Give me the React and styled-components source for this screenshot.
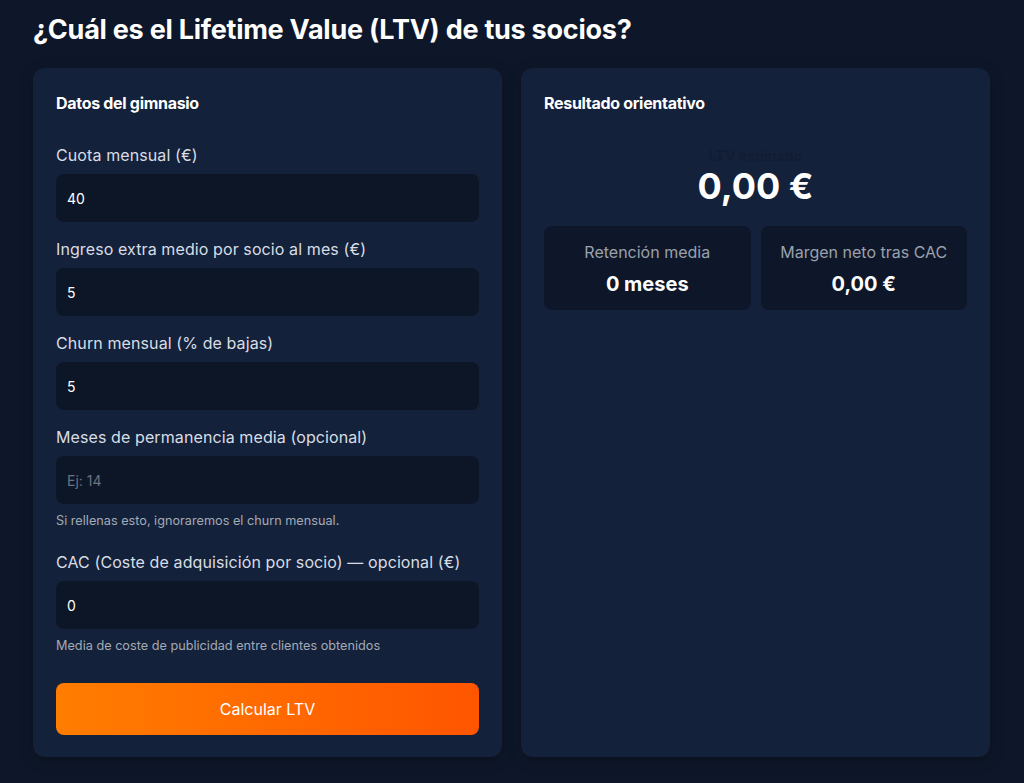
import React from "react";
import styled, { createGlobalStyle } from "styled-components";

const Global = createGlobalStyle`
  html, body { margin: 0; padding: 0; background: #0e1729; }
  body { font-family: Inter, "Noto Sans", sans-serif; color: #e5e7eb; }
  * { box-sizing: border-box; }
`;

const Page = styled.div`
  min-height: 783px;
  padding: 14px 33px 26px 33px;
  background: #0e1729;
`;

const Title = styled.h1`
  margin: 0 0 22px;
  font-size: 27px;
  line-height: 32px;
  font-weight: 700;
  letter-spacing: -0.25px;
  color: #ffffff;
`;

const Grid = styled.div`
  display: grid;
  grid-template-columns: 469px 469px;
  gap: 19px;
`;

const Card = styled.section`
  background: #14213a;
  border-radius: 12px;
  padding: 23px 23px 22px 23px;
  min-height: 689px;
  box-shadow: 0 4px 14px rgba(0, 0, 0, 0.25);
  display: flex;
  flex-direction: column;
`;

const CardTitle = styled.h2`
  margin: 0 0 28px;
  font-size: 16px;
  line-height: 24px;
  font-weight: 700;
  letter-spacing: -0.3px;
  color: #ffffff;
`;

const Field = styled.div`
  display: flex;
  flex-direction: column;
  margin-bottom: ${(p) => p.$mb || 15}px;
`;

const Label = styled.label`
  font-size: 16px;
  line-height: 24px;
  letter-spacing: 0.1px;
  color: #d8dde5;
  margin-bottom: 7px;
`;

const Input = styled.input`
  height: 48px;
  width: 100%;
  border: none;
  outline: none;
  border-radius: 8px;
  background: #0d1627;
  color: #ffffff;
  font-family: Inter, "Noto Sans", sans-serif;
  font-size: 14px;
  padding: 0 11px;
  &::placeholder { color: #6b7280; }
`;

const Help = styled.p`
  margin: 8px 0 0;
  font-size: 12.7px;
  line-height: 18px;
  color: #a3aab5;
`;

const Button = styled.button`
  margin-top: 13px;
  height: 52px;
  width: 100%;
  border: none;
  border-radius: 8px;
  background: linear-gradient(90deg, #ff7d00 0%, #ff6a00 50%, #ff5500 100%);
  color: #ffffff;
  font-family: Inter, "Noto Sans", sans-serif;
  font-size: 16px;
  cursor: pointer;
`;

const ResultHead = styled.div`
  display: flex;
  flex-direction: column;
  align-items: center;
  margin-top: 4px;
`;

const Ghost = styled.div`
  font-size: 14px;
  line-height: 18px;
  font-weight: 700;
  color: #121c32;
`;

const BigValue = styled.div`
  font-size: 36px;
  line-height: 42px;
  font-weight: 700;
  color: #ffffff;
  margin-bottom: 19px;
`;

const Stats = styled.div`
  display: grid;
  grid-template-columns: 1fr 1fr;
  gap: 10px;
`;

const Stat = styled.div`
  background: #0e1729;
  border-radius: 8px;
  height: 84px;
  display: flex;
  flex-direction: column;
  align-items: center;
  justify-content: center;
  gap: 10px;
  padding-top: 1px;
`;

const StatLabel = styled.div`
  font-size: 16px;
  line-height: 20px;
  color: #9aa1ad;
`;

const StatValue = styled.div`
  font-size: 20px;
  line-height: 24px;
  font-weight: 700;
  color: #ffffff;
`;

export default function App() {
  return (
    <Page>
      <Global />
      <Title>¿Cuál es el Lifetime Value (LTV) de tus socios?</Title>
      <Grid>
        <Card>
          <CardTitle>Datos del gimnasio</CardTitle>
          <Field>
            <Label>Cuota mensual (€)</Label>
            <Input defaultValue="40" />
          </Field>
          <Field>
            <Label>Ingreso extra medio por socio al mes (€)</Label>
            <Input defaultValue="5" />
          </Field>
          <Field>
            <Label>Churn mensual (% de bajas)</Label>
            <Input defaultValue="5" />
          </Field>
          <Field $mb={20}>
            <Label>Meses de permanencia media (opcional)</Label>
            <Input placeholder="Ej: 14" />
            <Help>Si rellenas esto, ignoraremos el churn mensual.</Help>
          </Field>
          <Field $mb={15}>
            <Label>CAC (Coste de adquisición por socio) — opcional (€)</Label>
            <Input defaultValue="0" />
            <Help>Media de coste de publicidad entre clientes obtenidos</Help>
          </Field>
          <Button>Calcular LTV</Button>
        </Card>
        <Card>
          <CardTitle>Resultado orientativo</CardTitle>
          <ResultHead>
            <Ghost>LTV estimado</Ghost>
            <BigValue>0,00 €</BigValue>
          </ResultHead>
          <Stats>
            <Stat>
              <StatLabel>Retención media</StatLabel>
              <StatValue>0 meses</StatValue>
            </Stat>
            <Stat>
              <StatLabel>Margen neto tras CAC</StatLabel>
              <StatValue>0,00 €</StatValue>
            </Stat>
          </Stats>
        </Card>
      </Grid>
    </Page>
  );
}
